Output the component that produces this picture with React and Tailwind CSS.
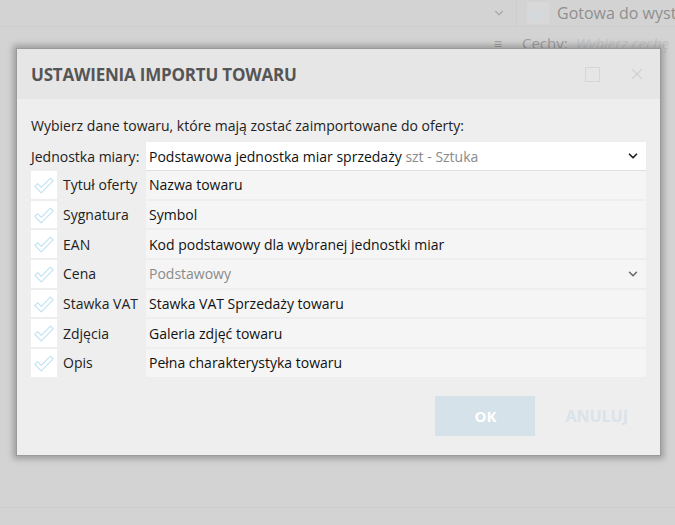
import { ChevronDown, X } from 'lucide-react'

const rows = [
  { label: 'Tytuł oferty', value: 'Nazwa towaru' },
  { label: 'Sygnatura', value: 'Symbol' },
  { label: 'EAN', value: 'Kod podstawowy dla wybranej jednostki miar' },
  { label: 'Cena', value: 'Podstawowy', select: true },
  { label: 'Stawka VAT', value: 'Stawka VAT Sprzedaży towaru' },
  { label: 'Zdjęcia', value: 'Galeria zdjęć towaru' },
  { label: 'Opis', value: 'Pełna charakterystyka towaru' },
]

function CheckMark({ className = 'w-[22px] h-[22px]' }) {
  return (
    <svg viewBox="0 0 24 24" className={className} fill="none" stroke="#bfe2f3" strokeWidth="1.2" strokeLinejoin="round">
      <path d="M2 13.5 L5 10.5 L9 14.5 L19 4.5 L22 7.5 L9 20.5 Z" />
    </svg>
  )
}

function Row({ label, value, select }) {
  return (
    <div className="flex h-[27.7px] items-stretch">
      <div className="w-[26px] bg-white flex items-center justify-center">
        <CheckMark />
      </div>
      <div className="w-[89px] pl-[6px] flex items-center text-[#222]">{label}</div>
      <div className="flex-1 bg-[#f5f5f5] flex items-center pl-[3px] pr-[6px]">
        <span className={select ? 'flex-1 text-[#8a8a8a]' : 'flex-1 text-[#111]'}>{value}</span>
        {select && <ChevronDown className="w-[14px] h-[14px] text-[#666]" strokeWidth={2.5} />}
      </div>
    </div>
  )
}

export default function App() {
  return (
    <div
      className="relative w-[675px] h-[525px] bg-[#d3d3d3] overflow-hidden text-[14px]"
      style={{ fontFamily: '"Segoe UI", "Open Sans", sans-serif' }}
    >
      {/* background page */}
      <div className="flex h-[27px] border-b border-[#cdcdcd]">
        <div className="w-[516px] shrink-0 flex items-center justify-end pr-[10px]">
          <ChevronDown className="w-[14px] h-[14px] text-[#a8a8a8]" />
        </div>
        <div className="flex-1 min-w-0 overflow-hidden flex items-center border-l border-[#cdcdcd] pl-[10px] gap-[8px]">
          <div className="w-[22px] h-[22px] shrink-0 bg-[#d8d8d8] flex items-center justify-center">
            <CheckMark className="w-[20px] h-[20px] opacity-60" />
          </div>
          <span className="text-[#8f8f8f] text-[16px] whitespace-nowrap">Gotowa do wystawienia</span>
        </div>
      </div>
      <div className="flex h-[32px]">
        <div className="w-[516px] shrink-0 flex items-center justify-end pr-[14px] text-[#a0a0a0]">≡</div>
        <div className="flex-1 min-w-0 overflow-hidden flex items-center pl-[6px] gap-[8px] whitespace-nowrap">
          <span className="text-[#a0a0a0] text-[15px]">Cechy:</span>
          <span className="text-[#c4c4c4] italic text-[15px]">Wybierz cechę</span>
        </div>
      </div>
      <div className="absolute left-0 right-0 top-[507px] border-t border-[#cecece]" />

      {/* modal */}
      <div className="absolute left-[16px] top-[48px] w-[645px] h-[408px] bg-[#eeeeee] border border-[#9a9a9a] shadow-[0_0_6px_3px_rgba(0,0,0,0.25)] flex flex-col">
        <div className="h-[50px] bg-[#e6e6e6] flex items-center pl-[14px] pr-[14px]">
          <h1 className="flex-1 font-bold text-[17px] text-[#555] tracking-[-0.2px] pt-[1px]">USTAWIENIA IMPORTU TOWARU</h1>
          <div className="w-[15px] h-[15px] border-[1.5px] border-[#d6d6d6] mr-[28px]" />
          <X className="w-[18px] h-[18px] text-[#d0d0d0]" strokeWidth={1.5} />
        </div>
        <div className="px-[14px] pt-[16px] flex flex-col">
          <p className="text-[#222] mb-[6px]">Wybierz dane towaru, które mają zostać zaimportowane do oferty:</p>
          <div className="flex h-[28px] items-stretch mb-[1px]">
            <div className="w-[115px] flex items-center text-[#222]">Jednostka miary:</div>
            <div className="flex-1 bg-white flex items-center pl-[3px] pr-[6px] shadow-[0_1px_1px_rgba(0,0,0,0.06)]">
              <span className="flex-1 text-[#111]">
                Podstawowa jednostka miar sprzedaży <span className="text-[#8a8a8a]">szt - Sztuka</span>
              </span>
              <ChevronDown className="w-[14px] h-[14px] text-[#222]" strokeWidth={3} />
            </div>
          </div>
          <div className="flex flex-col gap-[2px]">
            {rows.map((r) => (
              <Row key={r.label} {...r} />
            ))}
          </div>
          <div className="flex justify-end items-center mt-[19px] pr-[18px] gap-[30px]">
            <button className="w-[100px] h-[40px] bg-[#d5e2ea] text-white font-bold text-[15px]">OK</button>
            <button className="h-[40px] text-[#dae3ea] font-bold text-[16px]">ANULUJ</button>
          </div>
        </div>
      </div>
    </div>
  )
}
